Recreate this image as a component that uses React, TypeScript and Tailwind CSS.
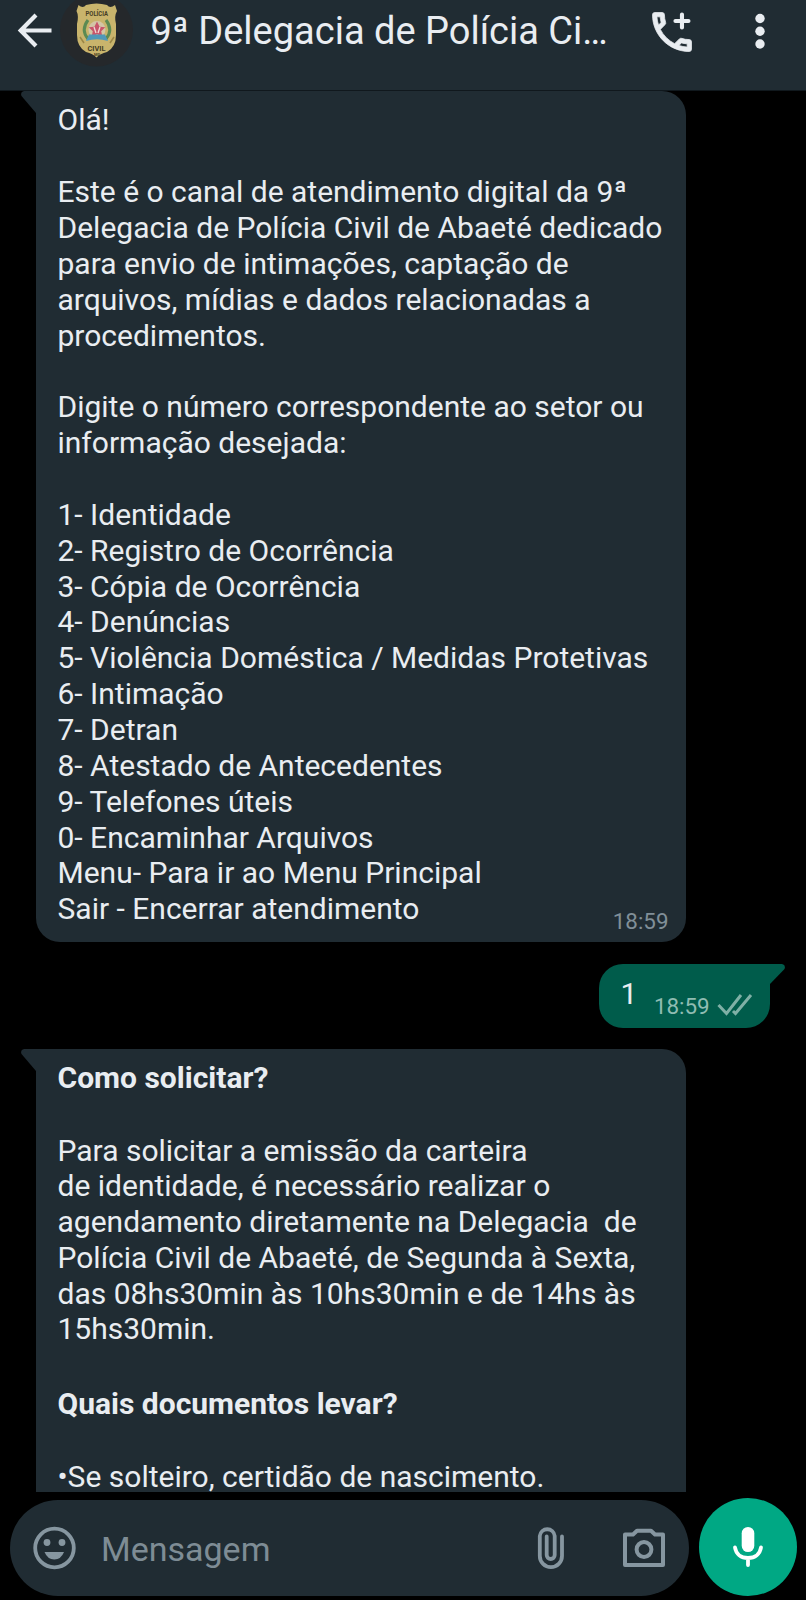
import React from "react";

const FONT = "font-['Roboto','Noto_Sans',sans-serif]";

type Line = { text: string; kind: "bold" | "text" | "gap" | "wideGap" };

const lineStyles: Record<Line["kind"], string> = {
  bold: "h-[36.400px] whitespace-pre font-bold",
  text: "h-[35.750px] whitespace-pre",
  gap: "h-[36.200px]",
  wideGap: "h-[39px]",
};

const menuLines: string[] = [
  "Olá!",
  "",
  "Este é o canal de atendimento digital da 9ª",
  "Delegacia de Polícia Civil de Abaeté dedicado",
  "para envio de intimações, captação de",
  "arquivos, mídias e dados relacionadas a",
  "procedimentos.",
  "",
  "Digite o número correspondente ao setor ou",
  "informação desejada:",
  "",
  "1- Identidade",
  "2- Registro de Ocorrência",
  "3- Cópia de Ocorrência",
  "4- Denúncias",
  "5- Violência Doméstica / Medidas Protetivas",
  "6- Intimação",
  "7- Detran",
  "8- Atestado de Antecedentes",
  "9- Telefones úteis",
  "0- Encaminhar Arquivos",
  "Menu- Para ir ao Menu Principal",
  "Sair - Encerrar atendimento",
];

const answerLines: Line[] = [
  { text: "Como solicitar?", kind: "bold" },
  { text: "", kind: "gap" },
  { text: "Para solicitar a emissão da carteira", kind: "text" },
  { text: "de identidade, é necessário realizar o", kind: "text" },
  { text: "agendamento diretamente na Delegacia  de", kind: "text" },
  { text: "Polícia Civil de Abaeté, de Segunda à Sexta,", kind: "text" },
  { text: "das 08hs30min às 10hs30min e de 14hs às", kind: "text" },
  { text: "15hs30min.", kind: "text" },
  { text: "", kind: "wideGap" },
  { text: "Quais documentos levar?", kind: "bold" },
  { text: "", kind: "gap" },
  { text: "•Se solteiro, certidão de nascimento.", kind: "text" },
];

function Badge() {
  return (
    <svg width="74" height="72" viewBox="0 0 74 72" className="shrink-0">
      <circle cx="36.500" cy="30" r="36.500" fill="#25282b" />
      <path
        d="M18.500 5 Q23 9 26 5 Q36.500 2 47 5 Q50 9 55 5 L57 11 Q54 16 56 24 V35 Q56 47 47 52 Q40 53.500 36.500 57.500 Q33 53.500 26 52 Q17 47 17 35 V24 Q19 16 16.500 11Z"
        fill="#c9b46c"
      />
      <text x="25.500" y="16.200" textLength="22.500" lengthAdjust="spacingAndGlyphs" fontSize="7.500" fontWeight="700" fill="#453d24">POLÍCIA</text>
      <path d="M28 20 Q20.500 30 28 39 M46 20 Q53.500 30 46 39" fill="none" stroke="#5b8a52" strokeWidth="3" />
      <path d="M20 37l4 6M54 37l-4 6" stroke="#9b8645" strokeWidth="1.500" />
      <circle cx="37" cy="29.500" r="8.500" fill="#d3c6a6" />
      <path d="M37 21.500l2.600 5.200 5.700.6-4.100 4 1.200 5.700-5.400-2.800-5.400 2.800 1.200-5.700-4.100-4 5.700-.6z" fill="#c8566a" />
      <path d="M34 27l2 6M40 27l-2 6" stroke="#f0d9d6" strokeWidth="1.300" />
      <path d="M29 34.500h16l3 6.500q-11-3.500-22 0z" fill="#4f98b8" />
      <text x="27.500" y="50.500" textLength="18" lengthAdjust="spacingAndGlyphs" fontSize="7.500" fontWeight="700" fill="#453d24">CIVIL</text>
      <text x="37" y="55.500" textAnchor="middle" fontSize="4" fontWeight="700" fill="#453d24">MG</text>
    </svg>
  );
}

function Header() {
  return (
    <header className="flex h-[91px] shrink-0 items-start border-b border-[#10181d] bg-[#202c33] pl-[17px]">
      <svg width="36" height="36" viewBox="0 0 36 36" className="mt-[12px] shrink-0" fill="none" stroke="#e9edf1" strokeWidth="4.200">
        <path d="M34.500 18.500H4M19 3 3.700 18.500 19 34" />
      </svg>
      <div className="ml-[7px]">
        <Badge />
      </div>
      <h1 className="ml-[16.500px] mt-[6.500px] w-[470px] shrink-0 whitespace-nowrap text-[38px] leading-[48px] text-[#e9edf1]">
        9ª Delegacia de Polícia Ci…
      </h1>
      <svg width="52" height="52" viewBox="0 0 24 24" className="ml-[25px] mt-[6px] shrink-0" fill="#e9edf1">
        <path
          stroke="#e9edf1"
          strokeWidth=".35"
          d="M6.540 5c.06.89.21 1.760.45 2.590l-1.200 1.200c-.41-1.200-.67-2.470-.76-3.790h1.510m9.860 12.020c.85.24 1.720.39 2.600.45v1.490c-1.320-.09-2.590-.35-3.800-.75l1.200-1.190M7.500 3H4c-.55 0-1 .45-1 1 0 9.390 7.610 17 17 17 .55 0 1-.45 1-1v-3.490c0-.55-.45-1-1-1-1.240 0-2.450-.2-3.570-.57-.1-.04-.21-.05-.31-.05-.26 0-.51.1-.71.29l-2.200 2.200c-2.830-1.450-5.150-3.760-6.590-6.590l2.200-2.200c.28-.28.36-.67.25-1.020C8.700 6.450 8.500 5.250 8.500 4c0-.55-.45-1-1-1z"
        />
        <path d="M16.600 3.900v6M13.600 6.900h6" stroke="#e9edf1" strokeWidth="1.900" strokeLinecap="round" />
      </svg>
      <svg width="12" height="40" viewBox="0 0 12 40" className="ml-[56px] mt-[11px] shrink-0" fill="#e9edf1">
        <circle cx="6" cy="7.500" r="4.700" />
        <circle cx="6" cy="20.300" r="4.700" />
        <circle cx="6" cy="33" r="4.700" />
      </svg>
    </header>
  );
}

function Tail() {
  return (
    <svg width="15" height="24" viewBox="0 0 15 24" className="shrink-0" fill="#202c33">
      <path d="M15 0H3Q-1 1 0.500 5L15 22z" />
    </svg>
  );
}

export default function App() {
  return (
    <div className={`flex h-[1600px] w-[806px] flex-col overflow-hidden bg-black ${FONT}`}>
      <Header />
      <main className="flex h-[1401px] shrink-0 flex-col overflow-hidden">
        <div className="flex shrink-0 pl-[21px]">
          <Tail />
          <section className="relative h-[851px] w-[650px] rounded-r-[24px] rounded-bl-[24px] bg-[#202c33] pl-[21.500px] pt-[11.400px] text-[30px] leading-[35.850px] text-[#e9edf1]">
            {menuLines.map((line, i) => (
              <p key={i} className="h-[35.870px] whitespace-pre">{line}</p>
            ))}
            <span className="absolute bottom-[8px] right-[17.500px] text-[22.400px] leading-[26px] text-[#808f98]">18:59</span>
          </section>
        </div>
        <div className="mt-[21.500px] flex h-[64.500px] shrink-0 pl-[598.500px]">
          <section className="flex w-[171.500px] rounded-l-[24px] rounded-br-[24px] bg-[#005c4b] pl-[22px]">
            <span className="mt-[12px] text-[30px] leading-[36px] text-[#e9edf1]">1</span>
            <span className="ml-[16.500px] mt-[29px] text-[22.400px] leading-[26px] text-[#8fbcb2]">18:59</span>
            <svg width="36" height="24" viewBox="0 0 36 24" className="ml-[7.500px] mt-[29px] shrink-0" fill="none" stroke="#7fb0a6" strokeWidth="3">
              <path d="M1.500 12 9.500 20.500 24 2M16 18l2.500 2.500L34 2" />
            </svg>
          </section>
          <svg width="15" height="22" viewBox="0 0 15 22" className="shrink-0" fill="#005c4b">
            <path d="M0 0H12Q16 1 14.500 5L0 20z" />
          </svg>
        </div>
        <div className="mt-[21px] flex shrink-0 pl-[21px]">
          <Tail />
          <section className="h-[443px] w-[650px] rounded-tr-[24px] bg-[#202c33] pl-[21.500px] pt-[11px] text-[30px] leading-[36px] text-[#e9edf1]">
            {answerLines.map((line, i) => (
              <p key={i} className={lineStyles[line.kind]}>
                {line.text}
              </p>
            ))}
          </section>
        </div>
      </main>
      <footer className="flex h-[108px] shrink-0 items-start pl-[10px] pt-[6px]">
        <div className="mt-[2px] flex h-[96px] w-[679px] items-start rounded-[48px] bg-[#202c33] pl-[22px]">
          <svg width="44" height="44" viewBox="0 0 44 44" className="mt-[26px] shrink-0" fill="#8696a0">
            <circle cx="22.500" cy="22" r="19.300" fill="none" stroke="#8696a0" strokeWidth="3.800" />
            <circle cx="15" cy="16.500" r="3.400" />
            <circle cx="30" cy="16.500" r="3.400" />
            <path d="M12.500 26H32Q29 33.500 22.300 33.500T12.500 26z" />
          </svg>
          <span className="ml-[25px] mt-[29px] w-[420px] text-[34px] leading-[40px] text-[#7e8c95]">Mensagem</span>
          <svg width="30" height="44" viewBox="0 0 30 44" className="ml-[15px] mt-[26px] shrink-0" fill="none" stroke="#8696a0" strokeWidth="3.800" strokeLinecap="round">
            <path d="M26 10.500V30A11.100 11.100 0 0 1 3.800 30V9.900A7.500 7.500 0 0 1 18.700 9.900V29A4 4 0 0 1 10.700 29V10.500" />
          </svg>
          <svg width="44" height="44" viewBox="0 0 44 44" className="ml-[56px] mt-[26px] shrink-0" fill="none" stroke="#8696a0" strokeWidth="4" strokeLinejoin="round">
            <path d="M3 8.500H11L15 4.700H29L33 8.500H41V39H3z" />
            <circle cx="22" cy="23.500" r="7.400" />
          </svg>
        </div>
        <button className="ml-[9.500px] flex h-[98px] w-[98px] items-start justify-center rounded-full bg-[#00a884]">
          <svg width="32" height="44" viewBox="0 0 32 44" className="mt-[28px]" fill="none" stroke="#fff" strokeWidth="3.800" strokeLinecap="round">
            <rect x="9.700" y="1" width="12.600" height="25" rx="6.300" fill="#fff" stroke="none" />
            <path d="M3 21.500C4 28 9 32 16 32S28 28 29 21.500M16 32V39" />
          </svg>
        </button>
      </footer>
    </div>
  );
}
